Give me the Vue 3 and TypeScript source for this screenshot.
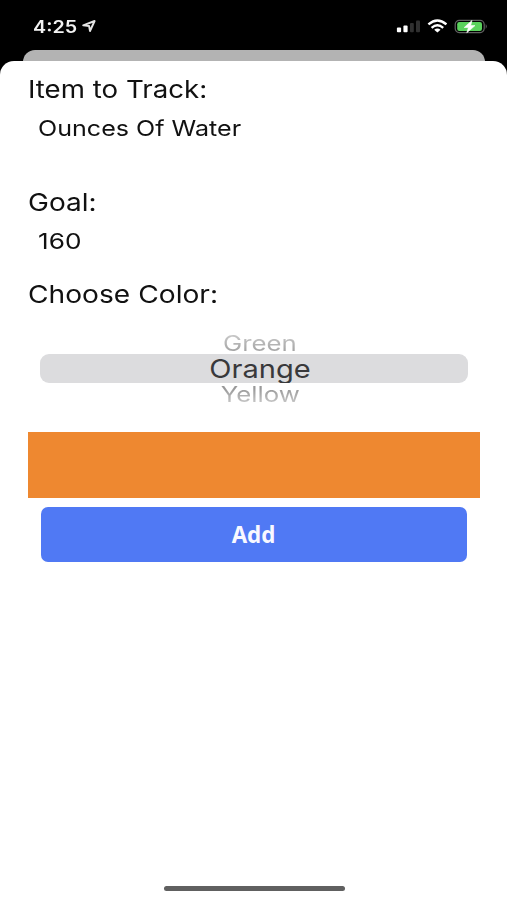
<script setup lang="ts">
import { ref } from 'vue'

const item = ref('Ounces Of Water')
const goal = ref(160)
const colors = ['Green', 'Orange', 'Yellow']
const selected = ref('Orange')
</script>

<template>
  <div class="screen">
    <header class="status">
      <div class="clock">
        <span class="time">4:25</span>
        <svg class="location" width="15" height="14" viewBox="0 0 15 14">
          <path d="M1.2 6.4 12.6 2 8 12 7.1 7Z" fill="none" stroke="#e4e4e4" stroke-width="1.9" stroke-linejoin="round" />
        </svg>
      </div>
      <div class="indicators">
        <svg width="24" height="14" viewBox="0 0 24 14">
          <rect x="0.9" y="8.6" width="4.2" height="4.6" rx="1" fill="#fff" />
          <rect x="7.4" y="6.5" width="4.2" height="6.7" rx="1" fill="#fff" />
          <rect x="14" y="4" width="3.8" height="9.2" rx="1" fill="#303030" />
          <rect x="20" y="1.4" width="4" height="11.8" rx="1" fill="#303030" />
        </svg>
        <svg width="20" height="14" viewBox="0 0 20 14">
          <path d="M1.4 5.4Q10.4-2.4 19.4 5.4M4.6 8.8Q10.4 3.8 16.2 8.8" fill="none" stroke="#fff" stroke-width="2.4" />
          <path d="M7.2 10.8Q10.4 8 13.6 10.8L10.4 13.6Z" fill="#fff" />
        </svg>
        <svg width="34" height="15" viewBox="0 0 34 15">
          <rect x="1.2" y="1.4" width="29" height="12.2" rx="4" fill="none" stroke="#626262" stroke-width="1.2" />
          <rect x="3.2" y="3" width="24.8" height="9" rx="2.2" fill="#5bd25d" />
          <path d="M31.7 5.1Q33.9 7.5 31.7 9.9Z" fill="#626262" />
          <path d="M18 1.4 10.2 8.5H14.4L12.8 13.8 21 6.6H16.7Z" fill="#fff" stroke="#fff" stroke-width="0.6" />
        </svg>
      </div>
    </header>
    <div class="backdrop"></div>
    <main class="sheet">
      <div class="label item-label"><span>Item to Track:</span></div>
      <div class="value item-value"><span>{{ item }}</span></div>
      <div class="label goal-label"><span>Goal:</span></div>
      <div class="value goal-value"><span>{{ goal }}</span></div>
      <div class="label color-label"><span>Choose Color:</span></div>
      <div class="picker">
        <div
          v-for="color in colors"
          :key="color"
          class="option"
          :class="[color.toLowerCase(), { selected: color === selected }]"
        >
          <span>{{ color }}</span>
        </div>
      </div>
      <div class="swatch"></div>
      <button class="add" type="button"><span>Add</span></button>
      <div class="home"></div>
    </main>
  </div>
</template>

<style>
body {
  background: #000;
}
</style>

<style scoped>
.screen {
  display: flex;
  flex-direction: column;
  height: 900px;
  overflow: hidden;
  background: #000;
  font-family: Inter, 'Liberation Sans', sans-serif;
}
.status {
  display: flex;
  justify-content: space-between;
  box-sizing: border-box;
  height: 50px;
  padding: 19px 19px 0 33px;
}
.clock {
  display: flex;
  color: #f2f2f2;
}
.time {
  width: 49px;
  font-size: 17px;
  font-weight: 600;
  line-height: 17px;
  transform: scaleX(1.16);
  transform-origin: left;
}
.indicators {
  display: flex;
  gap: 7px;
}
.backdrop {
  flex: none;
  height: 24px;
  margin: 0 22px -13px 23px;
  border-radius: 12px 12px 0 0;
  background: #b3b3b3;
}
.sheet {
  display: flex;
  flex: 1;
  flex-direction: column;
  box-sizing: border-box;
  padding: 14px 27px 9px 28px;
  border-radius: 14px 14px 0 0;
  background: #fff;
  color: #111;
  z-index: 1;
}
.label,
.value {
  flex: none;
  height: 30px;
  line-height: 30px;
  white-space: nowrap;
}
.label {
  font-size: 24.6px;
  line-height: 28px;
}
.value {
  padding-left: 10px;
  font-size: 22px;
}
.label span,
.value span {
  display: inline-block;
  transform: scaleX(1.14);
  transform-origin: left;
}
.label.item-label span {
  transform: scaleX(1.125);
}
.label.color-label span {
  transform: scaleX(1.145);
}
.item-value {
  margin-top: 8px;
}
.goal-label {
  margin-top: 45px;
}
.goal-value {
  margin-top: 8px;
}
.value.goal-value span {
  transform: scaleX(1.19);
}
.color-label {
  margin-top: 24px;
}
.picker {
  display: flex;
  flex: none;
  flex-direction: column;
  margin: 19px 12px 0;
}
.option {
  height: 25px;
  line-height: 25px;
  font-size: 23px;
  text-align: center;
  color: #b5b5b5;
}
.option span {
  display: inline-block;
  transform: translateX(6px) scale(1.12, 0.92);
}
.option.green {
  padding-top: 5px;
  height: 20px;
  line-height: 20px;
}
.green span {
  background: linear-gradient(#c8c8c8, #a0a0a0);
  background-clip: text;
  color: transparent;
}
.yellow span {
  background: linear-gradient(#999 20%, #c8c8c8 85%);
  background-clip: text;
  color: transparent;
}
.option.selected {
  height: 29px;
  overflow: hidden;
  border-radius: 9px;
  background: #dcdcde;
  color: #39393b;
  font-size: 25.5px;
  line-height: 29px;
}
.option.selected span {
  transform: translateX(5.5px) scaleX(1.14);
}
.swatch {
  flex: none;
  height: 66px;
  margin-top: 24px;
  background: #ee8830;
}
.add {
  flex: none;
  height: 55px;
  margin: 9px 13px 0;
  padding: 0;
  border: 0;
  border-radius: 7px;
  background: #5079f4;
  color: #f8f8ff;
  font: 700 24px/53px 'Noto Sans', sans-serif;
}
.add span {
  display: block;
  height: 55px;
  transform: translate(-0.5px, -0.5px) scaleX(0.93);
}
.home {
  width: 181px;
  height: 5px;
  margin: auto auto 0;
  border-radius: 3px;
  background: #606060;
}
</style>
